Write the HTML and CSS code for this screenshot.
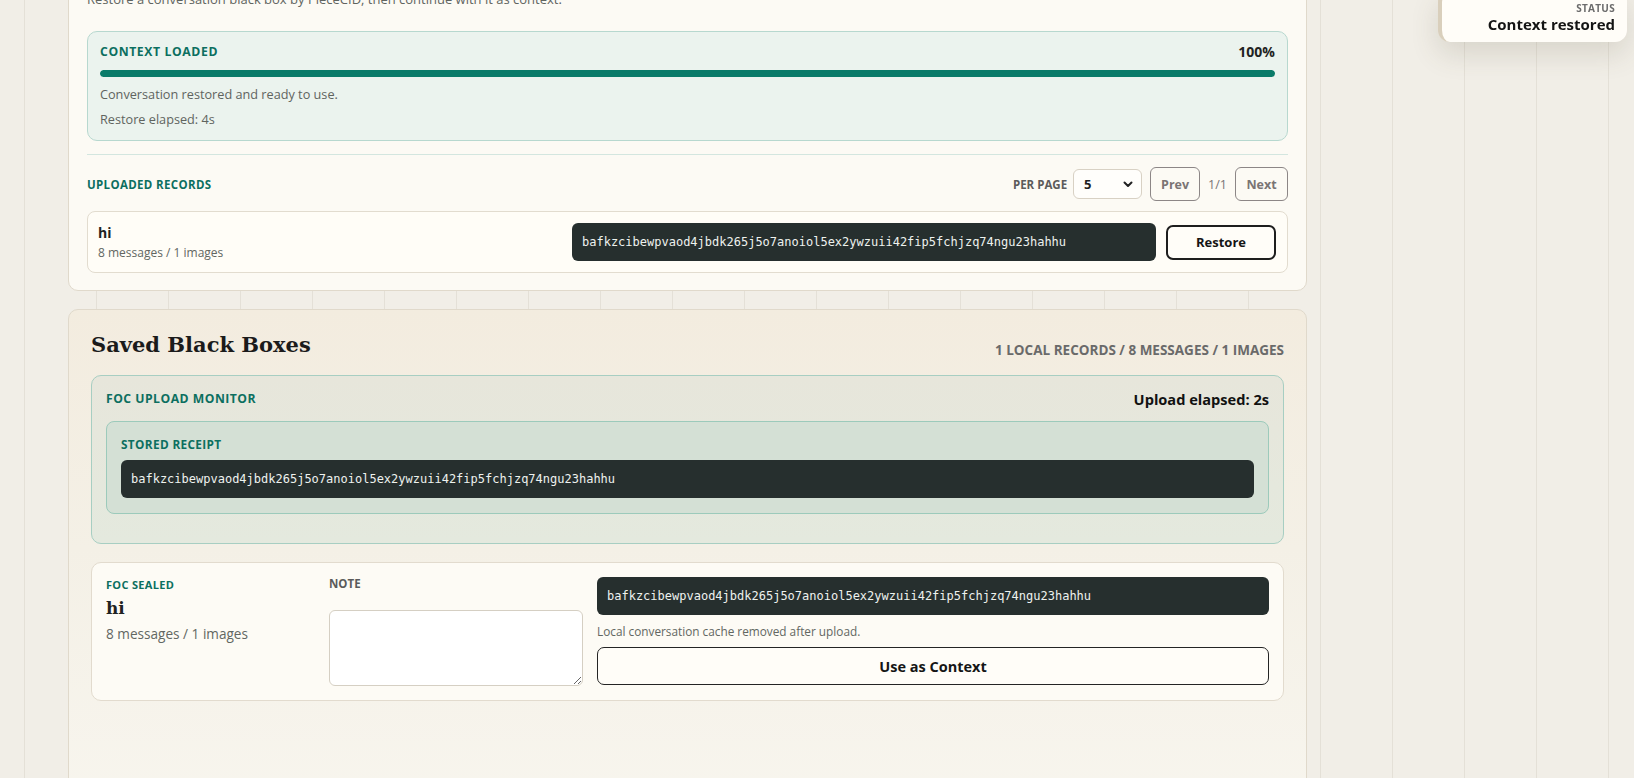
FILE: index.html
```html
<!DOCTYPE html>
<html lang="en">
<head>
  <meta charset="UTF-8">
  <title>Black Box Restore</title>
  <link rel="stylesheet" href="styles.css">
</head>
<body>

  <main class="shell">

    <!-- Restore from PieceCID -->
    <section class="panel restore-panel">
      <h2 class="panel-title">Restore Black Box</h2>
      <p class="panel-desc">Restore a conversation black box by PieceCID, then continue with it as context.</p>

      <div class="context-box">
        <div class="context-head">
          <span class="label context-label">Context loaded</span>
          <span class="percent">100%</span>
        </div>
        <div class="progress"><div class="progress-fill" style="width: 100%"></div></div>
        <p class="muted">Conversation restored and ready to use.</p>
        <p class="muted">Restore elapsed: 4s</p>
      </div>

      <div class="divider"></div>

      <div class="records-head">
        <span class="label">Uploaded records</span>
        <div class="pager">
          <span class="pager-label">Per page</span>
          <div class="select-wrap">
            <select class="per-page">
              <option>5</option>
              <option>10</option>
              <option>20</option>
            </select>
            <svg class="chevron" width="10" height="7" viewBox="0 0 10 7"><path d="M1.5 1.5 L5 5 L8.5 1.5" fill="none" stroke="#222" stroke-width="2" stroke-linecap="round" stroke-linejoin="round"/></svg>
          </div>
          <button class="pager-btn">Prev</button>
          <span class="pager-count">1/1</span>
          <button class="pager-btn">Next</button>
        </div>
      </div>

      <div class="record-row">
        <div class="record-info">
          <div class="record-name">hi</div>
          <div class="record-meta">8 messages / 1 images</div>
        </div>
        <div class="cid">bafkzcibewpvaod4jbdk265j5o7anoiol5ex2ywzuii42fip5fchjzq74ngu23hahhu</div>
        <button class="btn-outline restore-btn">Restore</button>
      </div>
    </section>

    <!-- Saved Black Boxes -->
    <section class="panel saved-panel">
      <div class="saved-head">
        <h2 class="saved-title">Saved Black Boxes</h2>
        <span class="saved-stats">1 local records / 8 messages / 1 images</span>
      </div>

      <div class="monitor">
        <div class="monitor-head">
          <span class="label monitor-label">FOC upload monitor</span>
          <span class="elapsed">Upload elapsed: 2s</span>
        </div>
        <div class="receipt">
          <div class="label receipt-label">Stored receipt</div>
          <div class="cid">bafkzcibewpvaod4jbdk265j5o7anoiol5ex2ywzuii42fip5fchjzq74ngu23hahhu</div>
        </div>
      </div>

      <div class="sealed-card">
        <div class="sealed-info">
          <div class="label sealed-label">FOC sealed</div>
          <div class="sealed-name">hi</div>
          <div class="sealed-meta">8 messages / 1 images</div>
        </div>
        <div class="note-col">
          <div class="note-label">Note</div>
          <textarea class="note-input"></textarea>
        </div>
        <div class="sealed-actions">
          <div class="cid">bafkzcibewpvaod4jbdk265j5o7anoiol5ex2ywzuii42fip5fchjzq74ngu23hahhu</div>
          <p class="cache-note">Local conversation cache removed after upload.</p>
          <button class="btn-outline context-btn">Use as Context</button>
        </div>
      </div>
    </section>

  </main>

  <aside class="toast">
    <div class="toast-label">Status</div>
    <div class="toast-text">Context restored</div>
  </aside>

</body>
</html>
```

FILE: styles.css
```css
body {
  margin: 0;
  font-family: 'Open Sans', 'Noto Sans', sans-serif;
  font-size: 13px;
  color: #1f2322;
  background-color: #f1eee7;
  background-image: linear-gradient(to right, #e4e0d7 1px, transparent 1px);
  background-size: 72px 100%;
  background-position: 24px 0;
  overflow: hidden;
}

.shell {
  width: 1239px;
  margin: -61px 0 0 68px;
}

.panel {
  border: 1px solid #e0d9cb;
  border-radius: 10px;
  box-sizing: border-box;
}

.restore-panel {
  background-color: #fcfaf4;
  padding: 18px 18px 17px;
}

.panel-title {
  font-family: 'DejaVu Serif', serif;
  font-size: 20px;
  line-height: 26px;
  margin: 0 0 6px;
}

.panel-desc {
  margin: 0 0 23px;
  line-height: 18px;
  color: #5f645f;
}

.label {
  font-size: 11.5px;
  font-weight: 700;
  letter-spacing: 0.03em;
  text-transform: uppercase;
  color: #0c6f60;
}

/* context loaded */
.context-box {
  background-color: #ebf3ee;
  border: 1px solid #b7d8cf;
  border-radius: 10px;
  padding: 12px 12px;
}

.context-head {
  display: flex;
  justify-content: space-between;
  align-items: center;
  line-height: 16px;
}

.context-label {
  font-size: 12.2px;
  letter-spacing: 0.05em;
}

.percent {
  font-weight: 700;
  font-size: 14px;
}

.progress {
  margin-top: 10px;
  height: 7px;
  border-radius: 4px;
  background-color: #cfe3dc;
  overflow: hidden;
}

.progress-fill {
  height: 100%;
  background-color: #0a7b69;
  border-radius: 4px;
}

.muted {
  margin: 8px 0 0;
  font-size: 12.7px;
  line-height: 18px;
  color: #5f645f;
}

.muted + .muted {
  margin-top: 7px;
}

.divider {
  height: 1px;
  background-color: #d3e6df;
  margin: 13px 0 12px;
}

/* uploaded records */
.records-head {
  display: flex;
  justify-content: space-between;
  align-items: center;
  height: 34px;
  margin-bottom: 10px;
}

.pager {
  display: flex;
  align-items: center;
  gap: 8px;
}

.pager-label {
  font-size: 11.5px;
  font-weight: 700;
  text-transform: uppercase;
  color: #5b5b5b;
  margin-right: -2px;
}

.select-wrap {
  position: relative;
}

.per-page {
  appearance: none;
  width: 69px;
  height: 30px;
  padding: 0 10px;
  font-family: inherit;
  font-size: 13px;
  font-weight: 700;
  color: #1f2322;
  background-color: #fffefb;
  border: 1px solid #d8d1c4;
  border-radius: 6px;
}

.chevron {
  position: absolute;
  right: 9px;
  top: 12px;
  pointer-events: none;
}

.pager-btn {
  width: 50px;
  height: 34px;
  font-family: inherit;
  font-size: 12.5px;
  font-weight: 700;
  color: #7a7474;
  background-color: transparent;
  border: 1.5px solid #8c8686;
  border-radius: 6px;
  cursor: pointer;
}

.pager-btn:last-child {
  width: 53px;
}

.pager-count {
  font-size: 12.5px;
  color: #7a7474;
}

.record-row {
  display: grid;
  grid-template-columns: 1fr 584px auto;
  gap: 10px;
  align-items: center;
  padding: 11px 11px 11px 10px;
  background-color: #fffdf7;
  border: 1px solid #e2dccf;
  border-radius: 8px;
}

.record-name {
  font-size: 14px;
  font-weight: 700;
  line-height: 18px;
  margin-bottom: 3px;
}

.record-meta {
  font-size: 12px;
  line-height: 16px;
  color: #626762;
}

.cid {
  font-family: 'DejaVu Sans Mono', 'Liberation Mono', monospace;
  font-size: 12px;
  line-height: 38px;
  height: 38px;
  padding: 0 10px;
  color: #eef2ee;
  background-color: #262f2e;
  border-radius: 6px;
  white-space: nowrap;
  overflow: hidden;
}

.btn-outline {
  font-family: inherit;
  font-weight: 700;
  color: #151515;
  background-color: #fffdf8;
  border-radius: 7px;
  cursor: pointer;
}

.restore-btn {
  width: 110px;
  height: 35px;
  font-size: 13px;
  border: 2px solid #1e1e1e;
}

/* saved black boxes */
.saved-panel {
  margin-top: 18px;
  padding: 22px 22px 140px;
  background: linear-gradient(to bottom, #f3ecdf 0%, #f4f0e6 45%, #f8f6ef 100%);
}

.saved-head {
  display: flex;
  justify-content: space-between;
  align-items: flex-end;
  margin-bottom: 17px;
}

.saved-title {
  font-family: 'DejaVu Serif', serif;
  font-size: 21px;
  line-height: 26px;
  margin: 0;
  color: #1b1b1b;
}

.saved-stats {
  font-size: 13.5px;
  font-weight: 700;
  line-height: 16px;
  text-transform: uppercase;
  color: #6a6a6a;
}

.monitor {
  background: linear-gradient(to bottom, #e7e6db, #e4e9de);
  border: 1px solid #a7cec2;
  border-radius: 10px;
  padding: 14px 14px 29px;
}

.monitor-head {
  display: flex;
  justify-content: space-between;
  align-items: center;
  line-height: 18px;
  margin-bottom: 13px;
}

.monitor-label {
  font-size: 12.2px;
  letter-spacing: 0.04em;
}

.elapsed {
  font-size: 14.6px;
  font-weight: 700;
  color: #111;
}

.receipt {
  background-color: #d4e0d5;
  border: 1px solid #9ccabb;
  border-radius: 8px;
  padding: 14px 14px 15px;
}

.receipt-label {
  font-size: 11.8px;
  line-height: 16px;
  margin-bottom: 8px;
}

.sealed-card {
  margin-top: 18px;
  display: grid;
  grid-template-columns: 209px 254px 1fr;
  gap: 14px;
  padding: 14px;
  background-color: #fdfbf5;
  border: 1px solid #e2dbce;
  border-radius: 10px;
}

.sealed-label {
  font-size: 11px;
  line-height: 16px;
}

.sealed-name {
  font-family: 'DejaVu Serif', serif;
  font-size: 17px;
  font-weight: 700;
  line-height: 22px;
  margin-top: 4px;
}

.sealed-meta {
  margin-top: 6px;
  font-size: 13.6px;
  line-height: 18px;
  color: #626762;
}

.note-label {
  font-size: 11.5px;
  font-weight: 700;
  line-height: 14px;
  text-transform: uppercase;
  color: #5b5b5b;
}

.note-input {
  display: block;
  box-sizing: border-box;
  width: 100%;
  height: 76px;
  margin-top: 19px;
  background-color: #fff;
  border: 1px solid #d5cfc3;
  border-radius: 6px;
}

.cache-note {
  margin: 7px 0 7px;
  font-size: 11.8px;
  line-height: 18px;
  color: #626762;
}

.context-btn {
  width: 100%;
  height: 38px;
  font-size: 14.5px;
  border: 1.5px solid #242424;
}

/* status toast */
.toast {
  position: fixed;
  top: -10px;
  right: 7px;
  width: 189px;
  box-sizing: border-box;
  padding: 12px 12px 8px;
  text-align: right;
  background-color: #fffdf8;
  border-left: 4px solid #d9cfbc;
  border-radius: 12px;
  box-shadow: 0 12px 28px rgba(90, 78, 55, 0.16);
}

.toast-label {
  font-size: 10px;
  font-weight: 700;
  line-height: 12px;
  letter-spacing: 0.03em;
  text-transform: uppercase;
  color: #6c6c6c;
}

.toast-text {
  font-size: 15px;
  font-weight: 700;
  line-height: 20px;
  color: #141414;
}
```
